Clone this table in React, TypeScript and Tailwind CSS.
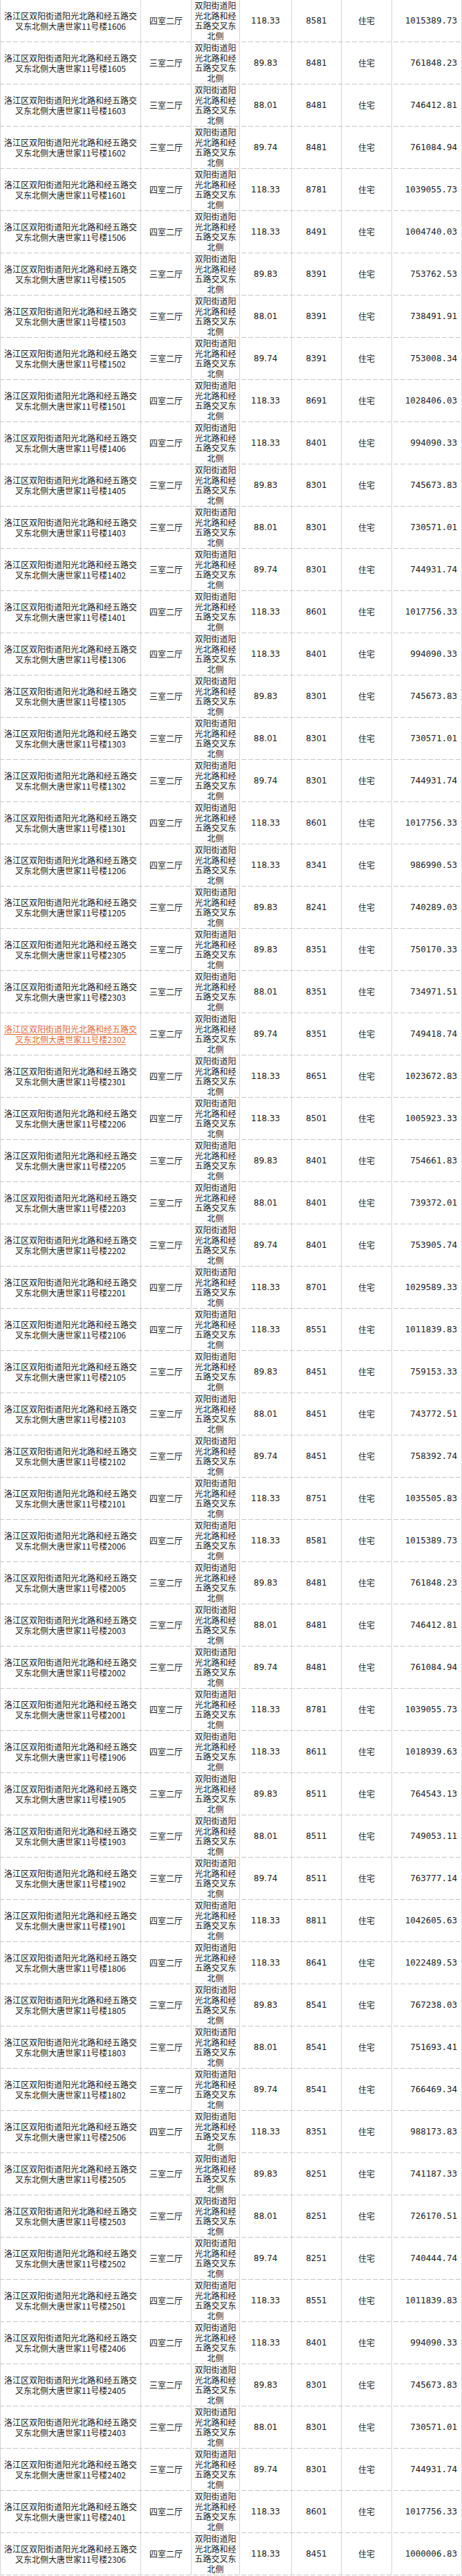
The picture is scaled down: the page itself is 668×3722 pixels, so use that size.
const ADDRESS = '洛江区双阳街道阳光北路和经五路交叉东北侧大唐世家11号楼';
const LOCATION = '双阳街道阳光北路和经五路交叉东北侧';

// [room, area, unit price, total]
const rows: [string, string, string, string][] = [
  ['1606', '118.33', '8581', '1015389.73'],
  ['1605', '89.83', '8481', '761848.23'],
  ['1603', '88.01', '8481', '746412.81'],
  ['1602', '89.74', '8481', '761084.94'],
  ['1601', '118.33', '8781', '1039055.73'],
  ['1506', '118.33', '8491', '1004740.03'],
  ['1505', '89.83', '8391', '753762.53'],
  ['1503', '88.01', '8391', '738491.91'],
  ['1502', '89.74', '8391', '753008.34'],
  ['1501', '118.33', '8691', '1028406.03'],
  ['1406', '118.33', '8401', '994090.33'],
  ['1405', '89.83', '8301', '745673.83'],
  ['1403', '88.01', '8301', '730571.01'],
  ['1402', '89.74', '8301', '744931.74'],
  ['1401', '118.33', '8601', '1017756.33'],
  ['1306', '118.33', '8401', '994090.33'],
  ['1305', '89.83', '8301', '745673.83'],
  ['1303', '88.01', '8301', '730571.01'],
  ['1302', '89.74', '8301', '744931.74'],
  ['1301', '118.33', '8601', '1017756.33'],
  ['1206', '118.33', '8341', '986990.53'],
  ['1205', '89.83', '8241', '740289.03'],
  ['2305', '89.83', '8351', '750170.33'],
  ['2303', '88.01', '8351', '734971.51'],
  ['2302', '89.74', '8351', '749418.74'],
  ['2301', '118.33', '8651', '1023672.83'],
  ['2206', '118.33', '8501', '1005923.33'],
  ['2205', '89.83', '8401', '754661.83'],
  ['2203', '88.01', '8401', '739372.01'],
  ['2202', '89.74', '8401', '753905.74'],
  ['2201', '118.33', '8701', '1029589.33'],
  ['2106', '118.33', '8551', '1011839.83'],
  ['2105', '89.83', '8451', '759153.33'],
  ['2103', '88.01', '8451', '743772.51'],
  ['2102', '89.74', '8451', '758392.74'],
  ['2101', '118.33', '8751', '1035505.83'],
  ['2006', '118.33', '8581', '1015389.73'],
  ['2005', '89.83', '8481', '761848.23'],
  ['2003', '88.01', '8481', '746412.81'],
  ['2002', '89.74', '8481', '761084.94'],
  ['2001', '118.33', '8781', '1039055.73'],
  ['1906', '118.33', '8611', '1018939.63'],
  ['1905', '89.83', '8511', '764543.13'],
  ['1903', '88.01', '8511', '749053.11'],
  ['1902', '89.74', '8511', '763777.14'],
  ['1901', '118.33', '8811', '1042605.63'],
  ['1806', '118.33', '8641', '1022489.53'],
  ['1805', '89.83', '8541', '767238.03'],
  ['1803', '88.01', '8541', '751693.41'],
  ['1802', '89.74', '8541', '766469.34'],
  ['2506', '118.33', '8351', '988173.83'],
  ['2505', '89.83', '8251', '741187.33'],
  ['2503', '88.01', '8251', '726170.51'],
  ['2502', '89.74', '8251', '740444.74'],
  ['2501', '118.33', '8551', '1011839.83'],
  ['2406', '118.33', '8401', '994090.33'],
  ['2405', '89.83', '8301', '745673.83'],
  ['2403', '88.01', '8301', '730571.01'],
  ['2402', '89.74', '8301', '744931.74'],
  ['2401', '118.33', '8601', '1017756.33'],
  ['2306', '118.33', '8451', '1000006.83'],
];

const cell = 'flex items-center justify-center text-center border-r border-[#d4d4d4]';

export default function App() {
  return (
    <div className="w-[668px] bg-white text-[#1c1c1c] font-['Noto_Sans_CJK_SC',sans-serif] text-[12px]">
      {rows.map(([room, area, price, total]) => {
        const linked = room === '2302';
        return (
          <div
            key={room}
            className="grid h-[61px] grid-cols-[204px_73px_70px_75px_72px_73px_1fr] bg-[linear-gradient(to_right,#c6c6c6_70%,transparent_0)] bg-[length:10px_1px] bg-bottom bg-repeat-x pb-px"
          >
            <div className={`${cell} border-l px-1 leading-[15px]`}>
              <span className={linked ? 'text-[#e2693a] underline underline-offset-2' : ''}>
                {`${ADDRESS}${room}`}
              </span>
            </div>
            <div className={cell}>{area === '118.33' ? '四室二厅' : '三室二厅'}</div>
            <div className={`${cell} px-1 leading-[14.5px]`}>{LOCATION}</div>
            <div className={`${cell} font-['DejaVu_Sans',sans-serif]`}>{area}</div>
            <div className={`${cell} font-['DejaVu_Sans',sans-serif]`}>{price}</div>
            <div className={cell}>住宅</div>
            <div className="flex items-center justify-end pr-[6px] border-r border-[#d4d4d4] font-['DejaVu_Sans_Mono',monospace] text-[12.5px]">
              {total}
            </div>
          </div>
        );
      })}
    </div>
  );
}
